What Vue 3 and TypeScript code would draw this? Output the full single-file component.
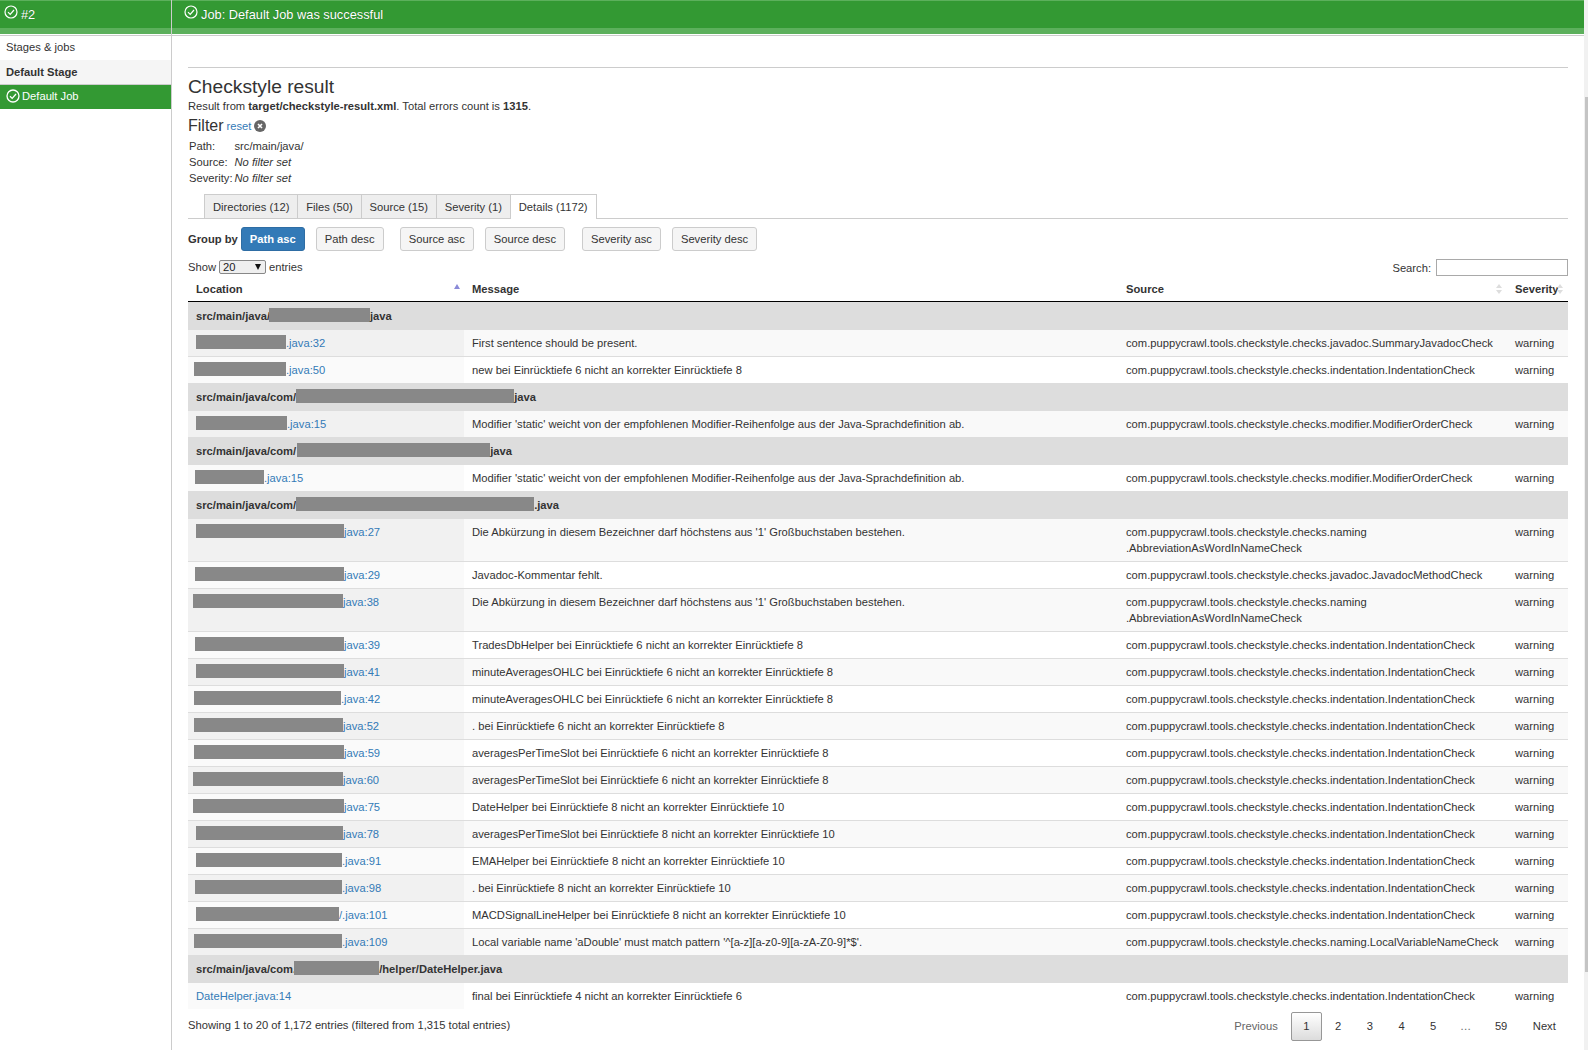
<script setup lang="ts">
type Row = { off: number; w: number; link: string; msg: string; src: string };
type Group = { pre: string; w: number; off: number; post: string; rows: Row[] };
const p = 'com.puppycrawl.tools.checkstyle.checks.';
const ind = p + 'indentation.IndentationCheck';
const abbrev = "Die Abkürzung in diesem Bezeichner darf höchstens aus '1' Großbuchstaben bestehen.";
const abbrevSrc = p + 'naming\n.AbbreviationAsWordInNameCheck';
const mod = "Modifier 'static' weicht von der empfohlenen Modifier-Reihenfolge aus der Java-Sprachdefinition ab.";
const groups: Group[] = [
  { pre: 'src/main/java/', w: 101, off: -1, post: 'java', rows: [
    { off: 0, w: 90, link: '.java:32', msg: 'First sentence should be present.', src: p + 'javadoc.SummaryJavadocCheck' },
    { off: -2, w: 92, link: '.java:50', msg: 'new bei Einrücktiefe 6 nicht an korrekter Einrücktiefe 8', src: ind },
  ] },
  { pre: 'src/main/java/com/', w: 218, off: 0, post: 'java', rows: [
    { off: 0, w: 91, link: '.java:15', msg: mod, src: p + 'modifier.ModifierOrderCheck' },
  ] },
  { pre: 'src/main/java/com/', w: 193, off: 1, post: 'java', rows: [
    { off: -1, w: 69, link: '.java:15', msg: mod, src: p + 'modifier.ModifierOrderCheck' },
  ] },
  { pre: 'src/main/java/com/', w: 238, off: 0, post: '.java', rows: [
    { off: 0, w: 148, link: 'java:27', msg: abbrev, src: abbrevSrc },
    { off: -1, w: 149, link: 'java:29', msg: 'Javadoc-Kommentar fehlt.', src: p + 'javadoc.JavadocMethodCheck' },
    { off: -3, w: 150, link: 'java:38', msg: abbrev, src: abbrevSrc },
    { off: -1, w: 149, link: 'java:39', msg: 'TradesDbHelper bei Einrücktiefe 6 nicht an korrekter Einrücktiefe 8', src: ind },
    { off: 0, w: 148, link: 'java:41', msg: 'minuteAveragesOHLC bei Einrücktiefe 6 nicht an korrekter Einrücktiefe 8', src: ind },
    { off: -2, w: 147, link: '.java:42', msg: 'minuteAveragesOHLC bei Einrücktiefe 6 nicht an korrekter Einrücktiefe 8', src: ind },
    { off: -2, w: 149, link: 'java:52', msg: '. bei Einrücktiefe 6 nicht an korrekter Einrücktiefe 8', src: ind },
    { off: -2, w: 150, link: 'java:59', msg: 'averagesPerTimeSlot bei Einrücktiefe 6 nicht an korrekter Einrücktiefe 8', src: ind },
    { off: -3, w: 150, link: 'java:60', msg: 'averagesPerTimeSlot bei Einrücktiefe 6 nicht an korrekter Einrücktiefe 8', src: ind },
    { off: -3, w: 151, link: 'java:75', msg: 'DateHelper bei Einrücktiefe 8 nicht an korrekter Einrücktiefe 10', src: ind },
    { off: 0, w: 147, link: 'java:78', msg: 'averagesPerTimeSlot bei Einrücktiefe 8 nicht an korrekter Einrücktiefe 10', src: ind },
    { off: 0, w: 146, link: '.java:91', msg: 'EMAHelper bei Einrücktiefe 8 nicht an korrekter Einrücktiefe 10', src: ind },
    { off: -1, w: 147, link: '.java:98', msg: '. bei Einrücktiefe 8 nicht an korrekter Einrücktiefe 10', src: ind },
    { off: 0, w: 143, link: '/.java:101', msg: 'MACDSignalLineHelper bei Einrücktiefe 8 nicht an korrekter Einrücktiefe 10', src: ind },
    { off: -2, w: 148, link: '.java:109', msg: "Local variable name 'aDouble' must match pattern '^[a-z][a-z0-9][a-zA-Z0-9]*$'.", src: p + 'naming.LocalVariableNameCheck' },
  ] },
  { pre: 'src/main/java/com.', w: 85, off: -2, post: '/helper/DateHelper.java', rows: [
    { off: 0, w: 0, link: 'DateHelper.java:14', msg: 'final bei Einrücktiefe 4 nicht an korrekter Einrücktiefe 6', src: ind },
  ] },
];
let counter = 0;
const numbered = groups.map((g) => ({
  ...g,
  rows: g.rows.map((r) => ({ ...r, odd: counter++ % 2 === 0 })),
}));
const tabs = ['Directories (12)', 'Files (50)', 'Source (15)', 'Severity (1)', 'Details (1172)'];
const pages = ['2', '3', '4', '5'];
</script>

<template>
  <div class="page">
    <div class="main">
      <div class="sidebar">
        <div class="bar side-bar">
          <svg class="chk" viewBox="0 0 14 14"><circle cx="7" cy="7" r="6" /><path d="M4 7.2l2.2 2.2L10 5" /></svg>
          <span>#2</span>
        </div>
        <div class="nav-link">Stages &amp; jobs</div>
        <div class="stage">Default Stage</div>
        <div class="job">
          <svg class="chk job-chk" viewBox="0 0 14 14"><circle cx="7" cy="7" r="6" /><path d="M4 7.2l2.2 2.2L10 5" /></svg>
          <span>Default Job</span>
        </div>
      </div>
      <div class="body">
        <div class="bar main-bar">
          <svg class="chk" viewBox="0 0 14 14"><circle cx="7" cy="7" r="6" /><path d="M4 7.2l2.2 2.2L10 5" /></svg>
          <span>Job: Default Job was successful</span>
        </div>
        <div class="content">
          <div class="rule"></div>
          <h1 class="title">Checkstyle result</h1>
          <p class="summary">Result from <b>target/checkstyle-result.xml</b>. Total errors count is <b>1315</b>.</p>
          <div class="filter">
            <span class="filter-title">Filter</span>
            <a class="link">reset</a>
            <svg class="reset" viewBox="0 0 12 12"><circle cx="6" cy="6" r="6" /><path d="M4 4l4 4M8 4l-4 4" /></svg>
          </div>
          <div class="filters">
            <span>Path:</span><span>src/main/java/</span>
            <span>Source:</span><i>No filter set</i>
            <span>Severity:</span><i>No filter set</i>
          </div>
          <div class="tabs">
            <div v-for="(t, i) in tabs" :key="t" class="tab" :class="{ active: i === 4 }">{{ t }}</div>
          </div>
          <div class="groupby">
            <b class="gb-label">Group by</b>
            <button class="btn primary">Path asc</button>
            <button class="btn">Path desc</button>
            <button class="btn sep">Source asc</button>
            <button class="btn">Source desc</button>
            <button class="btn sep sep-wide">Severity asc</button>
            <button class="btn">Severity desc</button>
          </div>
          <div class="controls">
            <div class="show">
              Show
              <span class="select"><span>20</span><span class="arrow"></span></span>
              entries
            </div>
            <label class="search">Search: <input type="text" /></label>
          </div>
          <table class="grid">
            <colgroup>
              <col class="c1" /><col class="c2" /><col class="c3" /><col class="c4" />
            </colgroup>
            <thead>
              <tr>
                <th>Location<span class="sort asc"></span></th>
                <th>Message</th>
                <th>Source<span class="sort both"></span></th>
                <th>Severity<span class="sort both last"></span></th>
              </tr>
            </thead>
            <tbody>
              <template v-for="g in numbered" :key="g.pre + g.w">
                <tr class="group">
                  <td colspan="4">{{ g.pre }}<span class="redact" :style="{ width: g.w + 'px', marginLeft: g.off + 'px' }"></span>{{ g.post }}</td>
                </tr>
                <tr v-for="r in g.rows" :key="r.link + r.msg" :class="r.odd ? 'odd' : 'even'">
                  <td class="sorted">
                    <span v-if="r.w" class="redact" :style="{ width: r.w + 'px', marginLeft: r.off + 'px' }"></span><a class="link">{{ r.link }}</a>
                  </td>
                  <td>{{ r.msg }}</td>
                  <td class="src">{{ r.src }}</td>
                  <td>warning</td>
                </tr>
              </template>
            </tbody>
          </table>
          <div class="foot">
            <div class="info">Showing 1 to 20 of 1,172 entries (filtered from 1,315 total entries)</div>
            <div class="pager">
              <span class="pg disabled">Previous</span>
              <span class="pg current">1</span>
              <span v-for="n in pages" :key="n" class="pg">{{ n }}</span>
              <span class="pg dots">…</span>
              <span class="pg">59</span>
              <span class="pg">Next</span>
            </div>
          </div>
        </div>
      </div>
    </div>
    <div class="scrollbar"><div class="thumb"></div></div>
  </div>
</template>

<style scoped>
.page {
  display: flex;
  width: 1588px;
  height: 1050px;
  overflow: hidden;
  background: #fff;
  font-family: "Liberation Sans", Arial, sans-serif;
  font-size: 11.2px;
  line-height: 16px;
  color: #333;
}
.main { display: flex; flex: 1; min-width: 0; }
.scrollbar { width: 4px; background: #f1f1f1; }
.thumb { margin: 97px 0 0 1px; height: 875px; background: #c4c4c4; }
.sidebar { width: 171px; flex: none; border-right: 1px solid #ccc; }
.body { flex: 1; min-width: 0; }
.bar {
  display: flex;
  align-items: flex-start;
  box-sizing: border-box;
  height: 34px;
  background: #339933;
  border-top: 1px solid #5cb05c;
  border-bottom: 6px solid #5cb05c;
  color: #fff;
  font-size: 12.8px;
  text-shadow: 0 0 1px rgba(0, 0, 0, 0.35);
  box-shadow: 0 1px 0 #fff, 0 2px 0 #ccc;
}
.bar span { line-height: 27px; }
.side-bar { padding-left: 4px; gap: 3px; }
.main-bar { padding-left: 12px; gap: 3px; }
.chk { width: 14px; height: 14px; margin-top: 4px; fill: none; stroke: #fff; stroke-width: 1.2; flex: none; }
.nav-link { height: 26px; padding: 0 6px 1px; box-sizing: border-box; line-height: 16px; display: flex; align-items: center; }
.stage {
  height: 24px;
  padding: 0 6px;
  line-height: 24px;
  font-weight: bold;
  background: #f5f5f5;
  border-bottom: 1px solid #ccc;
}
.job {
  display: flex;
  align-items: center;
  gap: 2px;
  box-sizing: border-box;
  height: 24px;
  padding: 0 0 2px 6px;
  background: #339933;
  color: #fff;
}
.job-chk { margin-top: 0; stroke-width: 1.3; }
.content { padding: 33px 16px 0 16px; }
.rule { border-top: 1px solid #ccc; }
.title { margin: 8px 0 0; font-size: 19.2px; line-height: 22px; font-weight: 400; }
.summary { margin: 0; }
.filter { display: flex; align-items: center; height: 20px; margin-top: 2px; }
.filter-title { font-size: 16px; margin-right: 3px; }
.reset { width: 12px; height: 12px; margin-left: 3px; fill: #666; stroke: #fff; stroke-width: 1.6; }
.reset circle { stroke: none; }
.filters {
  display: grid;
  grid-template-columns: 45.5px 1fr;
  margin: 2px 0 0 1px;
}
.tabs {
  display: flex;
  box-sizing: border-box;
  height: 25px;
  margin-top: 8px;
  padding-left: 16px;
  border-bottom: 1px solid #ccc;
}
.tab {
  box-sizing: border-box;
  height: 24px;
  padding: 0 7.9px;
  line-height: 24px;
  background: #eee;
  border: 1px solid #ccc;
  border-bottom: 0;
  margin-right: -1px;
}
.tab.active { height: 25px; padding: 0 8.4px 0 7.9px; background: #fff; margin-right: 0; }
.groupby { display: flex; align-items: center; margin-top: 8px; }
.gb-label { margin-right: 3px; }
.btn {
  box-sizing: border-box;
  height: 24px;
  padding: 0 8px;
  margin-right: 11px;
  font: inherit;
  line-height: 22px;
  color: #333;
  background: #f5f5f5;
  border: 1px solid #ccc;
  border-radius: 3px;
}
.btn.primary { color: #fff; font-weight: bold; background: #337ab7; border-color: #2e6da4; }
.btn.sep { margin-left: 5.3px; }
.btn.sep-wide { margin-left: 6px; }
.controls { display: flex; justify-content: space-between; align-items: flex-start; height: 19px; margin-top: 8px; }
.show { display: flex; align-items: center; gap: 3px; height: 16px; }
.select {
  display: inline-flex;
  align-items: center;
  justify-content: space-between;
  box-sizing: border-box;
  width: 47px;
  height: 14px;
  padding: 0 4px 0 3px;
  background: #efefef;
  border: 1px solid #888;
  border-radius: 2px;
  color: #222;
}
.arrow { width: 0; height: 0; border-left: 3.5px solid transparent; border-right: 3.5px solid transparent; border-top: 6px solid #111; }
.search { display: flex; align-items: center; gap: 5px; }
.search input {
  box-sizing: border-box;
  width: 132px;
  height: 17px;
  padding: 0;
  background: #fff;
  border: 1px solid #a9a9a9;
  outline: 0;
}
.grid {
  width: 100%;
  table-layout: fixed;
  border-collapse: collapse;
  border-spacing: 0;
}
.c1 { width: 276px; }
.c3 { width: 389px; }
.c4 { width: 61px; }
.grid th {
  position: relative;
  box-sizing: border-box;
  height: 23px;
  padding: 0 8px 1px;
  text-align: left;
  font-weight: bold;
  line-height: 16px;
  border-bottom: 1px solid #000;
}
.grid td {
  padding: 5px 8px;
  line-height: 16px;
  vertical-align: top;
  white-space: nowrap;
}
.grid .src { white-space: pre-line; }
.grid tbody tr.odd td, .grid tbody tr.even td { border-top: 1px solid #ddd; }
.group td { background: #ddd; font-weight: bold; padding-top: 6px !important; padding-bottom: 5px !important; }
.odd td { background: #f9f9f9; }
.odd td.sorted { background: #f1f1f1; }
.even td { background: #fff; }
.even td.sorted { background: #fafafa; }
.redact {
  display: inline-block;
  height: 14px;
  vertical-align: -2px;
  background: #888;
}
.link { color: #337ab7; }
.sort { position: absolute; width: 0; height: 0; }
.sort.asc { top: 6px; right: 4.5px; border-left: 3px solid transparent; border-right: 3px solid transparent; border-bottom: 5px solid #8a8ad8; }
.sort.both::before, .sort.both::after {
  content: "";
  position: absolute;
  left: -3px;
  border-left: 3px solid transparent;
  border-right: 3px solid transparent;
}
.sort.both { top: 6px; right: 8px; }
.sort.both::before { top: 0; border-bottom: 4px solid #ddd; }
.sort.both::after { top: 6px; border-top: 4px solid #ddd; }
.foot { display: flex; justify-content: space-between; align-items: flex-start; padding-top: 3px; }
.info { margin-top: 5px; }
.pager { display: flex; gap: 1.1px; }
.pg {
  box-sizing: border-box;
  height: 29px;
  padding: 0 11.2px;
  line-height: 27px;
  border: 1px solid transparent;
  border-radius: 2px;
  color: #333;
}
.pg.disabled { color: #666; }
.pg.dots { width: 32px; padding: 0; text-align: center; color: #666; }
.pg.current {
  border-color: #979797;
  background: linear-gradient(#fff, #dcdcdc);
}
</style>

<style>
html, body { margin: 0; padding: 0; }
</style>
